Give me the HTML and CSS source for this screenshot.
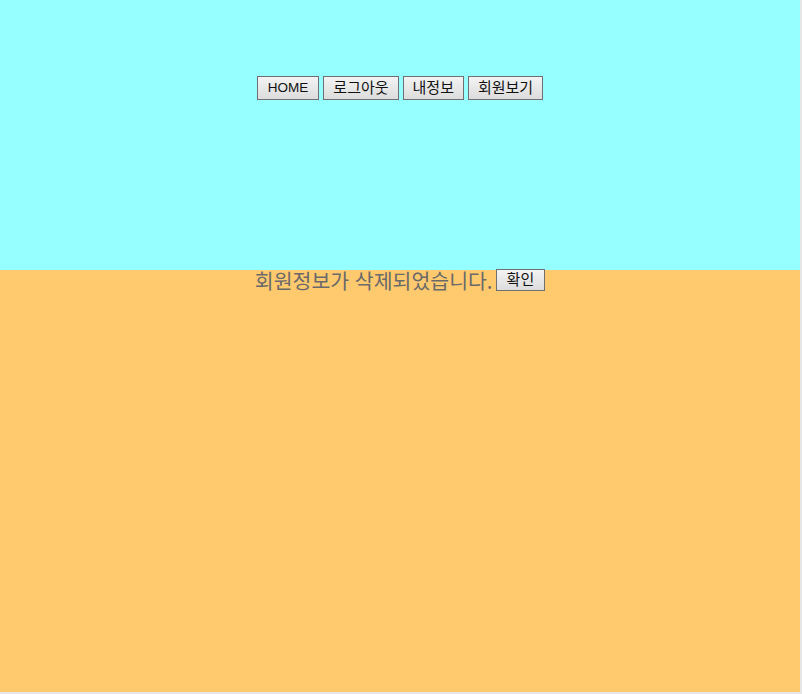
FILE: index.html
```html
<!DOCTYPE html>
<html lang="ko">
<head>
<meta charset="utf-8">
<title>회원정보 삭제</title>
<link rel="stylesheet" href="styles.css">
</head>
<body>
<div class="page">
  <header class="top">
    <nav class="menu">
      <button class="btn">HOME</button>
      <button class="btn btn-ko">로그아웃</button>
      <button class="btn btn-ko">내정보</button>
      <button class="btn btn-ko">회원보기</button>
    </nav>
  </header>
  <main class="content">
    <div class="msg-line">
      <span class="msg">회원정보가 삭제되었습니다.</span>
      <button class="btn btn-ko btn-ok">확인</button>
    </div>
  </main>
</div>
</body>
</html>
```

FILE: styles.css
```css
html, body {
  margin: 0;
  padding: 0;
  background: #e6e6e6;
}
.page {
  width: 800px;
}
.top {
  height: 270px;
  background: #96ffff;
  padding-top: 76px;
  box-sizing: border-box;
}
.menu {
  display: flex;
  justify-content: center;
  gap: 4px;
}
.btn {
  font-family: "Liberation Sans", "Noto Sans CJK KR", sans-serif;
  font-size: 13.5px;
  color: #111;
  height: 24px;
  padding: 0 10px;
  margin: 0;
  border: 1px solid #707070;
  border-radius: 0;
  background: linear-gradient(#f3f3f3, #dcdcdc);
  line-height: 20px;
}
.btn-ko {
  font-size: 15px;
  padding: 0 9px;
}
.content {
  height: 422px;
  background: #ffc96e;
}
.msg-line {
  display: flex;
  justify-content: center;
  align-items: flex-start;
  gap: 3px;
}
.msg {
  font-family: "Noto Sans CJK KR", sans-serif;
  font-size: 20.5px;
  line-height: 22px;
  color: #6a6a6a;
  margin-top: -1px;
}
.btn-ok {
  height: 22px;
  margin-top: -1px;
  padding: 0 10px;
}
```
